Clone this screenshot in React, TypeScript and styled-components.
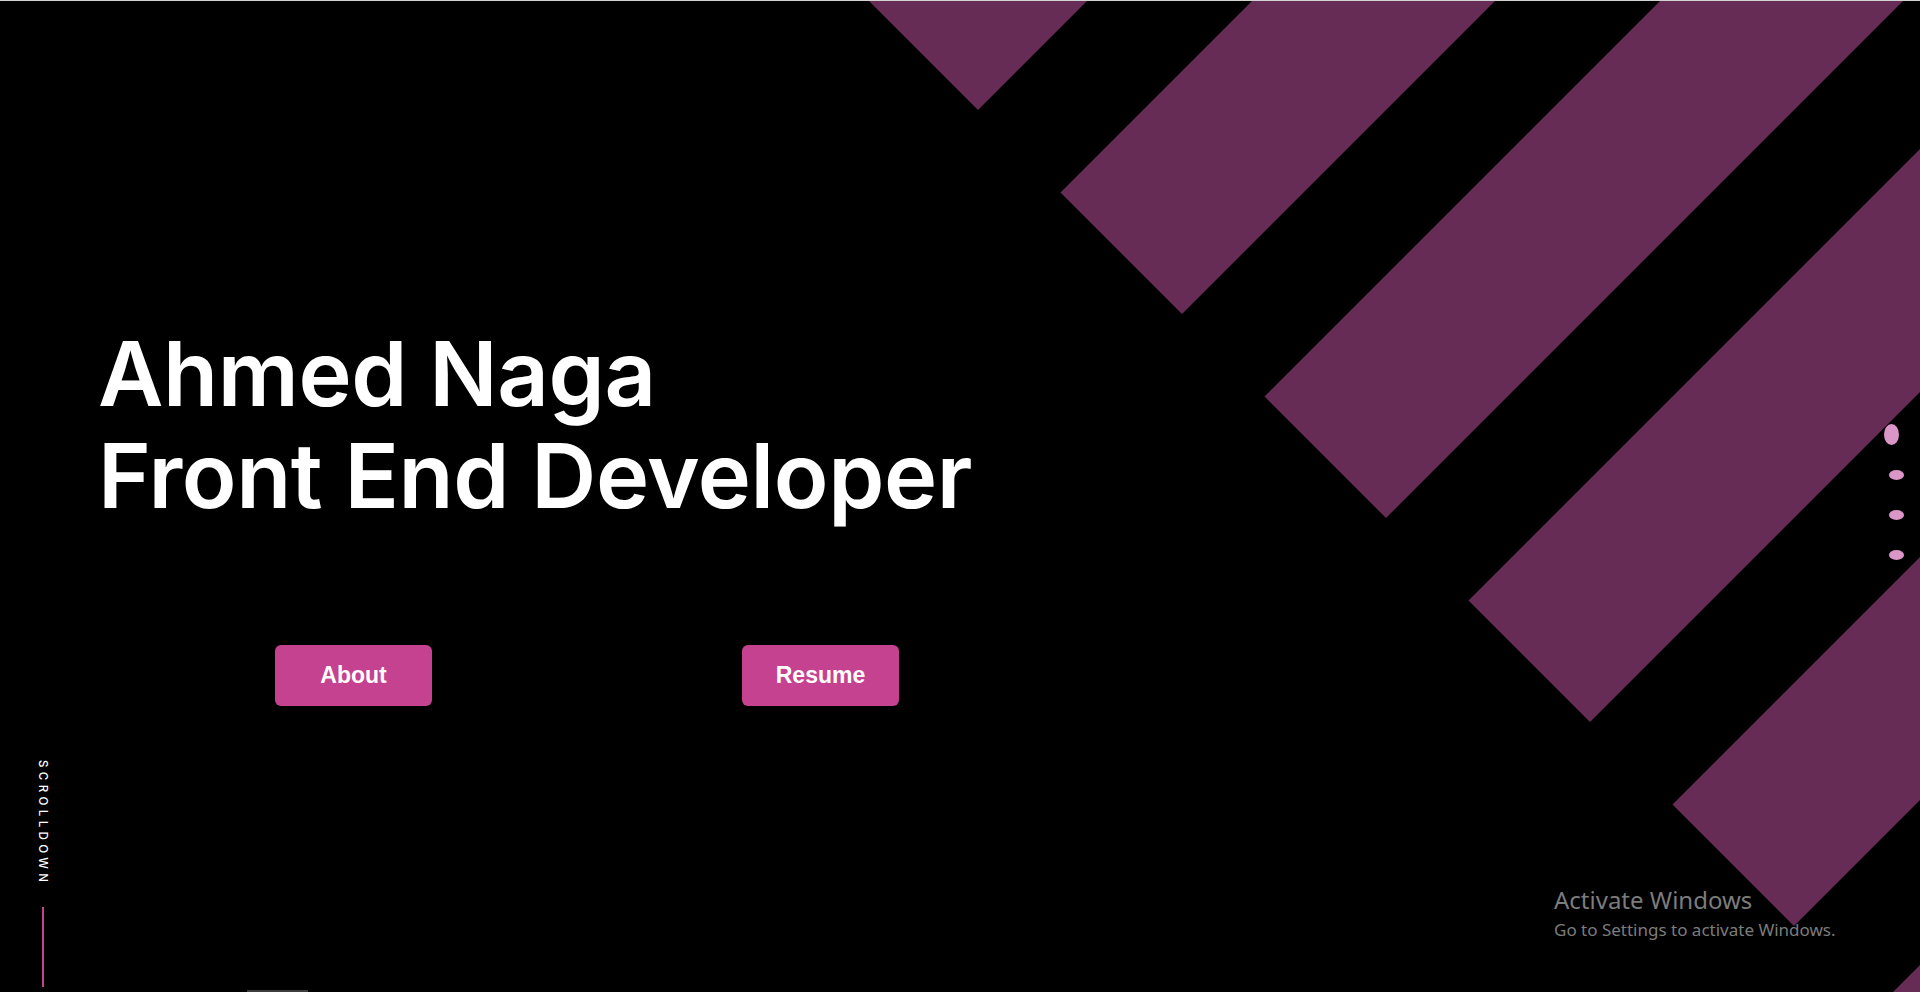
import React from 'react';
import styled, { createGlobalStyle } from 'styled-components';

const GlobalStyle = createGlobalStyle`
  * {
    box-sizing: border-box;
  }
  html, body {
    margin: 0;
    padding: 0;
    background: #000;
  }
`;

const Hero = styled.section`
  position: relative;
  height: 100vh;
  min-height: 992px;
  overflow: hidden;
  background: #000;
  border-top: 1px solid #d2d2d2;
  display: flex;
  flex-direction: column;
  padding: 322px 0 0 98px;
`;

const Stripes = styled.svg`
  position: absolute;
  top: 0;
  left: 0;
  width: 100%;
  height: 100%;
  z-index: 0;
`;

const Title = styled.h1`
  position: relative;
  z-index: 1;
  margin: 0;
  font-family: Inter, 'Noto Sans', sans-serif;
  font-weight: 600;
  font-size: 90px;
  line-height: 102px;
  letter-spacing: -0.4px;
  color: #fff;
`;

const ButtonRow = styled.div`
  position: relative;
  z-index: 1;
  display: flex;
  gap: 310px;
  margin: 118px 0 0 177px;
`;

const Button = styled.a`
  display: flex;
  align-items: center;
  justify-content: center;
  width: 157px;
  height: 61px;
  border-radius: 6px;
  background: #c4428f;
  color: #fff;
  font-family: 'Liberation Sans', Arial, sans-serif;
  font-weight: 700;
  font-size: 23px;
  text-decoration: none;
  cursor: pointer;
`;

const ScrollCue = styled.div`
  position: absolute;
  left: 33px;
  top: 759px;
  width: 20px;
  display: flex;
  flex-direction: column;
  align-items: center;
  gap: 21px;
  z-index: 1;
`;

const ScrollText = styled.span`
  writing-mode: vertical-rl;
  font-family: Inter, 'Noto Sans', sans-serif;
  font-size: 11.5px;
  font-weight: 500;
  letter-spacing: 4.4px;
  line-height: 20px;
  color: #fff;
`;

const ScrollLine = styled.span`
  width: 2px;
  height: 80px;
  background: #c4428f;
`;

const DotNav = styled.nav`
  position: absolute;
  right: 16px;
  top: 423px;
  display: flex;
  flex-direction: column;
  align-items: flex-end;
  gap: 30px;
  z-index: 1;
`;

const Dot = styled.span<{ $active?: boolean }>`
  display: block;
  width: 15px;
  height: ${(p) => (p.$active ? '21px' : '10px')};
  margin-right: ${(p) => (p.$active ? '5px' : '0')};
  margin-bottom: ${(p) => (p.$active ? '-5px' : '0')};
  border-radius: 50%;
  background: #d996c6;
`;

const Watermark = styled.div`
  position: absolute;
  left: 1554px;
  top: 885px;
  z-index: 2;
  font-family: 'Noto Sans', 'Open Sans', sans-serif;
  color: #7c7c7c;
  pointer-events: none;
`;

const WatermarkTitle = styled.div`
  font-size: 24px;
  line-height: 28.8px;
`;

const WatermarkText = styled.div`
  font-size: 17px;
  line-height: 22px;
  margin-top: 4px;
`;

const EdgeBar = styled.span`
  position: absolute;
  left: 247px;
  bottom: 0;
  width: 61px;
  height: 2px;
  background: #3d3d3d;
`;

// bands at 45deg; every cap sits on the line x - y = 869
const CAP = 869;
const FAR = 5000;
const bands = [0, 1, 2, 3, 4, 5].map((k) => {
  const a = 844 + 408 * k;
  const b = 1087 + 408 * k;
  const pt = (s: number, d: number) => `${(s + d) / 2},${(s - d) / 2}`;
  return [pt(a, CAP), pt(b, CAP), pt(b, FAR), pt(a, FAR)].join(' ');
});

const App = () => {
  return (
    <>
      <GlobalStyle />
      <Hero id="home">
        <Stripes viewBox="0 0 1920 992" preserveAspectRatio="xMaxYMin slice">
          {bands.map((points, i) => (
            <polygon key={i} points={points} fill="#672c56" />
          ))}
        </Stripes>
        <Title>
          Ahmed Naga
          <br />
          Front End Developer
        </Title>
        <ButtonRow>
          <Button>About</Button>
          <Button>Resume</Button>
        </ButtonRow>
        <ScrollCue>
          <ScrollText>SCROLLDOWN</ScrollText>
          <ScrollLine />
        </ScrollCue>
        <DotNav>
          <Dot $active />
          <Dot />
          <Dot />
          <Dot />
        </DotNav>
        <Watermark>
          <WatermarkTitle>Activate Windows</WatermarkTitle>
          <WatermarkText>Go to Settings to activate Windows.</WatermarkText>
        </Watermark>
        <EdgeBar />
      </Hero>
    </>
  );
};

export default App;
